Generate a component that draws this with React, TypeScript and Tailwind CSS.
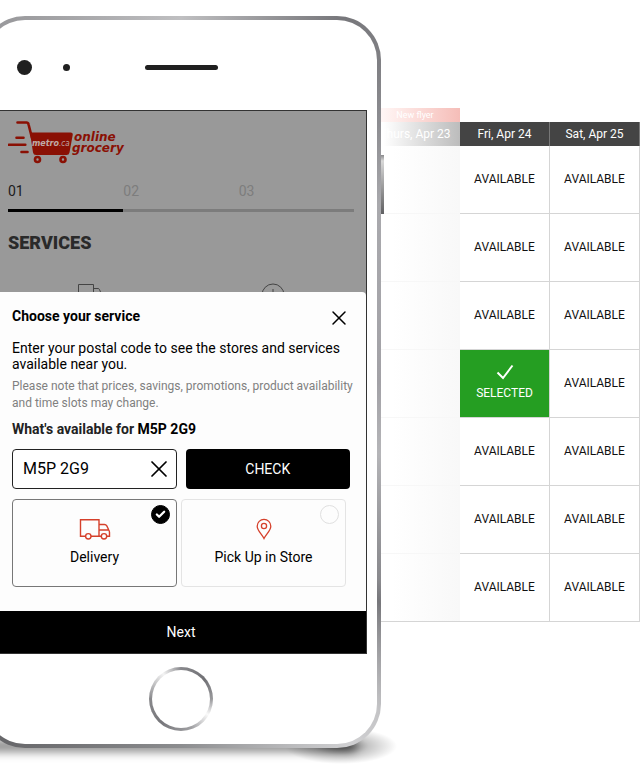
import { useState } from "react";
import { X, Check } from "lucide-react";

const days = ["Thurs, Apr 23", "Fri, Apr 24", "Sat, Apr 25"];
const rows = [0, 1, 2, 3, 4, 5, 6];

function Logo() {
  return (
    <svg viewBox="0 0 120 44" className="block w-[120px] h-[44px]" role="img" aria-label="metro.ca online grocery">
      <g fill="none" stroke="#8a1004" strokeLinecap="round" strokeLinejoin="round">
        <path d="M9.500 2.500h9q1.600 0 2 1.800L24 18" strokeWidth="2.600" />
        <path d="M8.500 17.800h7M.8 24.800h16.500M13.500 32h6" strokeWidth="2.600" />
      </g>
      <path d="M22 12.500H62.500q2.700 0 2.200 2.500l-3.200 17.500q-.5 2.500-3 2.500H28q-2.500 0-3-2.500z" fill="#8a1004" />
      <circle cx="29.500" cy="39.500" r="2.500" fill="none" stroke="#8a1004" strokeWidth="2.600" />
      <circle cx="55" cy="39.500" r="2.500" fill="none" stroke="#8a1004" strokeWidth="2.600" />
      <text x="24" y="25.500" fontSize="8" fontWeight="700" fontStyle="italic" fill="#bfaaa7" fontFamily="'DejaVu Sans', sans-serif">
        metro<tspan fontWeight="400" fontFamily="'DejaVu Sans Condensed', 'DejaVu Sans', sans-serif">.ca</tspan>
      </text>
      <g fontSize="12" fontWeight="700" fontStyle="italic" fill="#8a1004" fontFamily="'DejaVu Sans', sans-serif">
        <text x="66" y="21">online</text>
        <text x="64" y="32">grocery</text>
      </g>
    </svg>
  );
}

function Truck({ className }: { className?: string }) {
  return (
    <svg viewBox="0 0 32 22" className={className} fill="none" stroke="currentColor" strokeWidth="1.400">
      <path d="M6.500 18.300H1.500V1.800H20v16.500h-8M20 6.500h5.500q1.500 0 2.300 1.400l2 4.100q.7 1.200.7 2.500v3.800h-3M20 18.300h2.300M20 12h9.800" />
      <circle cx="9.300" cy="18.300" r="2.700" />
      <circle cx="25" cy="18.300" r="2.700" />
    </svg>
  );
}

function Pin() {
  return (
    <svg viewBox="0 0 16 22" className="w-4 h-[22px]" fill="none" stroke="currentColor" strokeWidth="1.300">
      <path d="M8 20.500C6 16.500 1.200 12.500 1.200 8.200a6.800 6.800 0 0 1 13.600 0C14.800 12.500 10 16.500 8 20.500z" />
      <circle cx="8" cy="8" r="2.600" />
    </svg>
  );
}

function Calendar() {
  const [selected, setSelected] = useState("3-1");

  return (
    <table className="flex-1 table-fixed border-separate border-spacing-0 -ml-[11px] mt-[92px] text-center text-[12px]">
      <thead>
        <tr>
          <th className="w-1/3 h-[14px] p-0 text-[9px] leading-[14px] font-normal text-white bg-linear-to-r from-[#fff5f4] from-15% to-[#f5bdb8]">New flyer</th>
          <td className="w-1/3 p-0" />
          <td className="w-1/3 p-0" />
        </tr>
        <tr className="text-white">
          {days.map((day, i) => (
            <th
              key={day}
              scope="col"
              className={`h-6 p-0 pb-px font-normal whitespace-nowrap ${i === 0 ? "bg-linear-to-r from-white from-15% to-[#bcbcbc]" : "bg-[#444] border-r border-[#777]"}`}
            >
              {day}
            </th>
          ))}
        </tr>
      </thead>
      <tbody>
        {rows.map((row) => (
          <tr key={row}>
            <td
              className={`p-0 bg-linear-to-r from-white from-25% to-[#f8f8f8] border-b ${row === rows.length - 1 ? "border-[#d5d5d5]" : "border-[#f7f7f7]"}`}
            />
            {[1, 2].map((col) => {
              const id = `${row}-${col}`;
              const active = id === selected;
              return (
                <td key={col} className="p-0 border-b border-r border-[#d5d5d5]">
                  <button
                    type="button"
                    onClick={() => setSelected(id)}
                    className={`flex flex-col items-center justify-center w-full h-[67px] pb-[2px] ${active ? "bg-[#259e22] text-white" : "bg-white text-[#111]"}`}
                  >
                    {active && (
                      <svg viewBox="0 0 18 16" className="w-[18px] h-4 mb-1" fill="none" stroke="currentColor" strokeWidth="2">
                        <path d="M1.500 8.500 7 14 16.500 1.500" />
                      </svg>
                    )}
                    {active ? "SELECTED" : "AVAILABLE"}
                  </button>
                </td>
              );
            })}
          </tr>
        ))}
      </tbody>
    </table>
  );
}

function ServiceSheet() {
  const [code, setCode] = useState("M5P 2G9");
  const [service, setService] = useState("Delivery");

  return (
    <div className="bg-[#fdfdfd] rounded-t pt-4 text-black">
      <div className="px-4">
        <div className="flex justify-between items-start h-5">
          <h2 className="text-[14px] leading-4 font-bold">Choose your service</h2>
          <button type="button" aria-label="Close" className="-mr-px -mt-[2px]">
            <X className="w-6 h-6" strokeWidth={1.5} />
          </button>
        </div>
        <p className="mt-3 text-[14px] leading-4">Enter your postal code to see the stores and services available near you.</p>
        <p className="mt-[6px] -mr-2 text-[12px] leading-[17px] text-[#808080]">
          Please note that prices, savings, promotions, product availability and time slots may change.
        </p>
        <label htmlFor="postal" className="block mt-[7px] text-[14px] leading-5 font-bold text-[#222]">
          What's available for <span className="text-black">M5P 2G9</span>
        </label>

        <div className="grid grid-cols-2 gap-[9px] mt-[10px]">
          <div className="flex items-center h-10 border border-[#222] rounded bg-white pl-[10px] pr-[3px]">
            <input
              id="postal"
              value={code}
              onChange={(e) => setCode(e.target.value)}
              className="flex-1 min-w-0 text-[16px] outline-none"
            />
            <button type="button" aria-label="Clear" onClick={() => setCode("")}>
              <X className="w-7 h-7" strokeWidth={1.5} />
            </button>
          </div>
          <button type="button" className="h-10 rounded bg-black text-white text-[14px]">CHECK</button>
        </div>

        <div className="grid grid-cols-2 gap-1 mt-[10px] mr-1">
          {["Delivery", "Pick Up in Store"].map((name) => {
            const active = name === service;
            return (
              <label
                key={name}
                className={`relative flex flex-col items-center h-[88px] pt-[18px] border rounded ${active ? "border-[#777]" : "border-[#e4e4e4]"}`}
              >
                <input
                  type="radio"
                  name="service"
                  checked={active}
                  onChange={() => setService(name)}
                  className="absolute top-[5px] right-[6px] w-[19px] h-[19px] appearance-none rounded-full border border-[#e0e0e0] checked:bg-black checked:border-black"
                />
                {active && <Check className="absolute top-[9px] right-[10px] w-[11px] h-[11px] text-white pointer-events-none" strokeWidth={5} />}
                <span className="flex items-center h-[22px] text-[#d5402b]">
                  {name === "Delivery" ? <Truck className="w-8 h-[22px]" /> : <Pin />}
                </span>
                <span className="mt-[7px] text-[14px] leading-5">{name}</span>
              </label>
            );
          })}
        </div>
      </div>
      <button type="button" className="w-full h-[42px] mt-6 bg-black text-white text-[14px]">Next</button>
    </div>
  );
}

export default function App() {
  return (
    <div className="flex items-start min-h-screen overflow-hidden bg-white pt-4 font-['Roboto',sans-serif]">
      {/* Phone */}
      <div className="relative z-10 shrink-0 w-5/8 -ml-[19px]">
        <div className="absolute left-0 right-6 -bottom-1 h-3 rounded-full bg-black/45 blur-[5px]" />
        <div className="absolute -right-4 -bottom-4 w-28 h-9 bg-[radial-gradient(closest-side,#00000090,#00000038_50%,transparent)]" />
        <div className="absolute top-[139px] -right-[3px] w-1 h-[59px] bg-linear-to-b from-[#8a8a8c] via-[#d8d8d8] via-10% to-[#606062]" />
        <div className="relative p-1 rounded-[44px] bg-[conic-gradient(#bfbfc1_0deg,#77777b_24deg,#808084_32deg,#a9a9ad_48deg,#a2a1a6_90deg,#b5b5b8_110deg,#8a8a8e_135deg,#77777b_138deg,#c4c4c6_149deg,#d0d0d2_155deg,#8c8d8f_180deg,#67676a_206deg,#999_270deg,#9a9a9d_335deg,#bfbfc1_360deg)]">
          <div className="rounded-[40px] bg-white">
            <div className="flex items-center h-[90px] pt-1">
              <span className="w-[15px] h-[15px] ml-8 rounded-full bg-[#202020]" />
              <span className="w-[7px] h-[7px] ml-[31px] rounded-full bg-[#202020]" />
              <span className="w-[73px] h-[5px] ml-[75px] rounded-full bg-[#202020]" />
            </div>

            <div className="mx-[10px] border border-[#333] bg-[#999]">
              <div className="px-3 pt-[9px]">
                <Logo />
                <ol className="grid grid-cols-3 mt-[17px] text-[14px] leading-5 text-[#7d7d7d]">
                  <li className="pb-2 border-b-3 border-black text-[#1c1c1c]">01</li>
                  <li className="pb-2 border-b-3 border-[#7c7c7c]">02</li>
                  <li className="pb-2 border-b-3 border-[#7c7c7c]">03</li>
                </ol>
                <h1 className="mt-[19px] text-[18px] leading-6 font-black text-[#2a2a2a]">SERVICES</h1>
                <div className="flex justify-between h-[9px] mt-[28px] px-[69px] overflow-hidden text-[#444]">
                  <svg viewBox="0 0 25 22" className="w-[25px] h-[22px]" fill="none" stroke="currentColor">
                    <path d="M1.500 22V1.500h15V22M16.500 5.500H21q1 0 1.500 1l2 5" />
                  </svg>
                  <svg viewBox="0 0 24 24" className="w-6 h-6" fill="none" stroke="currentColor">
                    <circle cx="12" cy="12" r="11" />
                    <path d="M12 6v6l4 3" />
                  </svg>
                </div>
              </div>
              <ServiceSheet />
            </div>

            <div className="flex justify-center pt-[13px] pb-[13px]">
              <button
                type="button"
                aria-label="Home"
                className="w-16 h-16 p-[3px] rounded-full bg-[conic-gradient(#88888c_0deg,#707074_50deg,#99999c_90deg,#fafafa_120deg,#a0a0a3_160deg,#77777b_220deg,#88888b_270deg,#f4f4f4_325deg,#88888c_360deg)]"
              >
                <span className="block w-full h-full rounded-full bg-white" />
              </button>
            </div>
          </div>
        </div>
      </div>

      {/* Time slots */}
      <Calendar />
    </div>
  );
}
